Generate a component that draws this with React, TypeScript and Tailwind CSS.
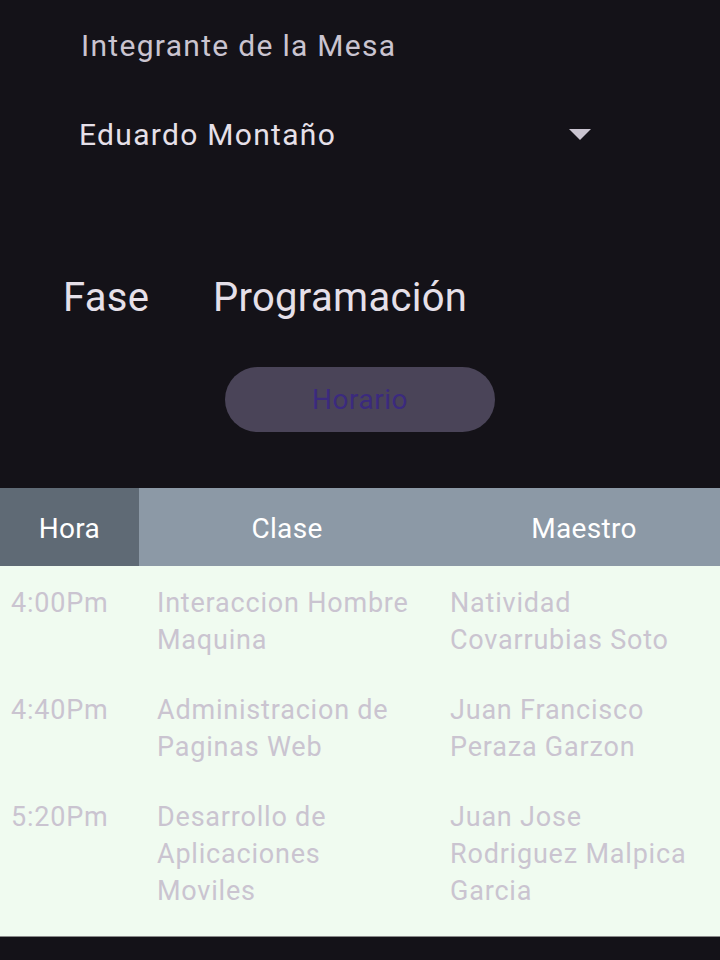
import React from 'react';

interface Row {
  hora: string;
  clase: string;
  maestro: string;
}

const rows: Row[] = [
  { hora: '4:00Pm', clase: 'Interaccion Hombre Maquina', maestro: 'Natividad Covarrubias Soto' },
  { hora: '4:40Pm', clase: 'Administracion de Paginas Web', maestro: 'Juan Francisco Peraza Garzon' },
  { hora: '5:20Pm', clase: 'Desarrollo de Aplicaciones Moviles', maestro: 'Juan Jose Rodriguez Malpica Garcia' },
];

export default function App() {
  return (
    <div className="min-h-screen bg-[#141218] font-['Roboto','Noto_Sans',sans-serif] pb-[24px]">
      <div className="pt-[28px] pl-[81px] text-[30px] leading-[36px] tracking-[1.3px] text-[#cac4d0]">
        Integrante de la Mesa
      </div>

      <div className="mt-[53px] flex items-center justify-between pl-[79px] pr-[129px] h-[36px]">
        <span className="text-[30px] leading-[36px] tracking-[1.3px] text-[#e6e0e9]">Eduardo Montaño</span>
        <svg width="22" height="12" viewBox="0 0 22 12">
          <path d="M0 0 L22 0 L11 11 Z" fill="#cac4d0" />
        </svg>
      </div>

      <div className="mt-[120px] flex items-center pl-[63px] text-[40px] leading-[50px] tracking-[0.3px] text-[#e6e0e9]">
        <span className="w-[150px]">Fase</span>
        <span>Programación</span>
      </div>

      <div className="mt-[44px] mx-auto w-[270px] h-[65px] rounded-full bg-[#4a4458] flex items-center justify-center">
        <span className="text-[28px] tracking-[0.5px] text-[#3b2a7e]">Horario</span>
      </div>

      <div className="mt-[56px]">
        <div className="flex h-[78px] text-[28px] tracking-[0.3px] text-white">
          <div className="w-[139px] bg-[#5f6a75] flex items-center justify-center pt-[3px]">Hora</div>
          <div className="flex-1 bg-[#8c99a6] flex items-center pt-[3px]">
            <div className="w-[296px] text-center">Clase</div>
            <div className="flex-1 text-center pl-[13px]">Maestro</div>
          </div>
        </div>
        <div className="bg-[#f0fbf0] pb-[12px] border-b border-[#8a8a8a] text-[27px] leading-[37px] tracking-[0.8px] text-[#cac4d0]">
          {rows.map((r) => (
            <div key={r.hora} className="grid grid-cols-[139px_311px_1fr] pt-[19px] pb-[14px]">
              <div className="pl-[11px]">{r.hora}</div>
              <div className="pl-[18px] pr-[35px]">{r.clase}</div>
              <div className="pr-[20px]">{r.maestro}</div>
            </div>
          ))}
        </div>
      </div>
    </div>
  );
}
